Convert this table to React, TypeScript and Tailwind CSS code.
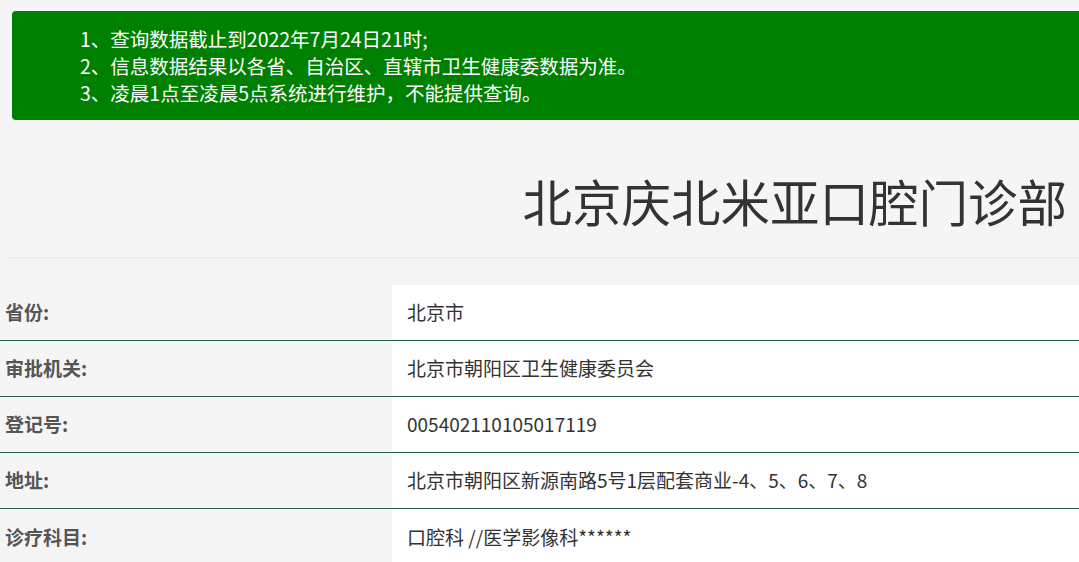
import React from "react";

const rows = [
  { label: "省份:", value: "北京市" },
  { label: "审批机关:", value: "北京市朝阳区卫生健康委员会" },
  { label: "登记号:", value: "005402110105017119" },
  { label: "地址:", value: "北京市朝阳区新源南路5号1层配套商业-4、5、6、7、8" },
  { label: "诊疗科目:", value: "口腔科 //医学影像科******" },
];

const App = () => {
  return (
    <div className="min-h-screen overflow-hidden bg-[#f5f5f5] font-['Noto_Sans_CJK_SC',sans-serif]">
      {/* notice */}
      <div className="pt-[11px] pl-[12px]">
        <div className="-mr-4 rounded-[4px] bg-[#008000] pt-[14px] pb-[14px] pl-[68px] text-[19.5px] leading-[27px] text-white">
          <p>1、查询数据截止到2022年7月24日21时;</p>
          <p>2、信息数据结果以各省、自治区、直辖市卫生健康委数据为准。</p>
          <p>3、凌晨1点至凌晨5点系统进行维护，不能提供查询。</p>
        </div>
      </div>

      {/* title */}
      <h1 className="mt-[51px] pr-[12px] text-right text-[49.5px] leading-[59px] text-[#333]">
        北京庆北米亚口腔门诊部
      </h1>
      <div className="mt-[27px] ml-2 h-[2px] border-t border-[#ebebeb] bg-[#f0f0f0]" />

      {/* detail table */}
      <div className="mt-[26px]">
        {rows.map((r, i) => (
          <div
            key={i}
            className="flex h-[56px] border-b border-[#2b5e48] last:border-b-0"
          >
            <div className="flex w-[392px] shrink-0 items-center pl-[5px] text-[19px] font-bold text-[#555]">
              {r.label}
            </div>
            <div className="flex flex-1 items-center bg-white pl-[15px] text-[19px] text-[#333]">
              {r.value}
            </div>
          </div>
        ))}
      </div>
    </div>
  );
};

export default App;
